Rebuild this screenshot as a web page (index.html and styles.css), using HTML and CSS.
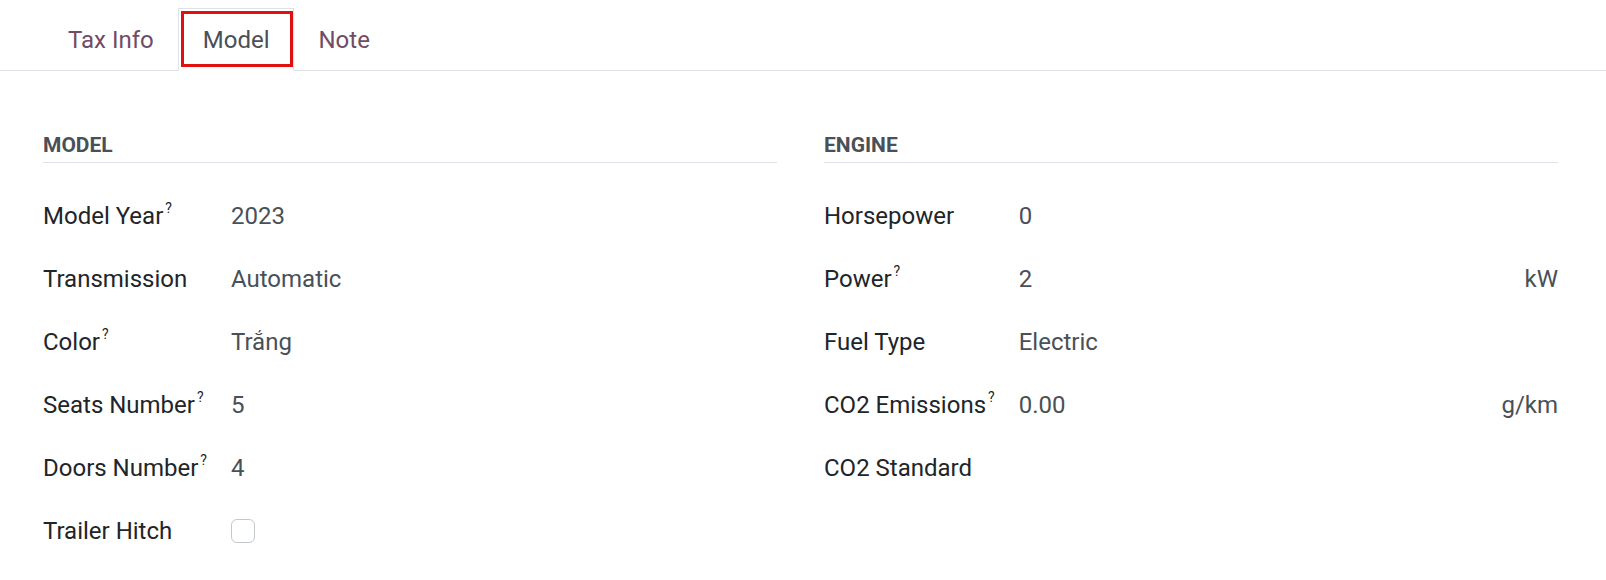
FILE: index.html
```html
<!DOCTYPE html>
<html lang="en">
<head>
<meta charset="utf-8">
<title>Model</title>
<link rel="stylesheet" href="styles.css">
</head>
<body>
<nav class="tabs">
  <a class="tab">Tax Info</a>
  <a class="tab active">Model<span class="mark"></span></a>
  <a class="tab">Note</a>
</nav>
<main class="sheet">
  <section class="group">
    <h3 class="group-title">Model</h3>
    <div class="label">Model Year<sup>?</sup></div><div class="value">2023</div>
    <div class="label">Transmission</div><div class="value">Automatic</div>
    <div class="label">Color<sup>?</sup></div><div class="value">Trắng</div>
    <div class="label">Seats Number<sup>?</sup></div><div class="value">5</div>
    <div class="label">Doors Number<sup>?</sup></div><div class="value">4</div>
    <div class="label">Trailer Hitch</div><div class="value"><span class="checkbox"></span></div>
  </section>
  <section class="group">
    <h3 class="group-title">Engine</h3>
    <div class="label">Horsepower</div><div class="value">0</div>
    <div class="label">Power<sup>?</sup></div><div class="value"><span>2</span><span class="unit">kW</span></div>
    <div class="label">Fuel Type</div><div class="value">Electric</div>
    <div class="label">CO2 Emissions<sup>?</sup></div><div class="value"><span>0.00</span><span class="unit">g/km</span></div>
    <div class="label">CO2 Standard</div><div class="value"></div>
  </section>
</main>
</body>
</html>
```
FILE: styles.css
```css
* { box-sizing: border-box; }
html, body { margin: 0; background: #fff; }
body {
  font-family: Roboto, "Noto Sans", sans-serif;
  font-size: 24px;
  line-height: 34px;
  color: #212529;
}
.tabs {
  display: flex;
  margin-top: 8px;
  padding-left: 43.5px;
  border-bottom: 1px solid #dee2e6;
}
.tab {
  position: relative;
  padding: 14px 23.5px 13px;
  border: 1px solid transparent;
  border-bottom: 0;
  margin-bottom: -1px;
  color: #714b67;
  text-decoration: none;
}
.tab.active {
  color: #495057;
  background: #fff;
  border-color: #dee2e6;
  border-bottom: 1px solid #fff;
}
.mark {
  position: absolute;
  left: 2px;
  right: 0;
  top: 2px;
  bottom: 3px;
  border: 3px solid #e01010;
}
.sheet {
  display: grid;
  grid-template-columns: 1fr 1fr;
  column-gap: 47px;
  padding: 59px 48px 0 43px;
}
.group {
  display: grid;
  grid-template-columns: max-content 1fr;
  grid-template-rows: auto;
  grid-auto-rows: 63px;
  align-content: start;
}
.group-title {
  grid-column: 1 / -1;
  margin: 0 0 21px;
  font-size: 21px;
  line-height: 31.5px;
  font-weight: 700;
  text-transform: uppercase;
  color: #495057;
  border-bottom: 1px solid #dee2e6;
  height: 33px;
}
.label {
  align-self: center;
  padding-right: 24px;
  color: #212529;
}
.label sup {
  font-size: 14px;
  line-height: 0;
  vertical-align: 11px;
  margin-left: 2px;
}
.value {
  display: flex;
  align-items: center;
  justify-content: space-between;
  color: #495057;
}
.checkbox {
  width: 24px;
  height: 24px;
  border: 1px solid #c4c8cc;
  border-radius: 6px;
  background: #fff;
}
```
